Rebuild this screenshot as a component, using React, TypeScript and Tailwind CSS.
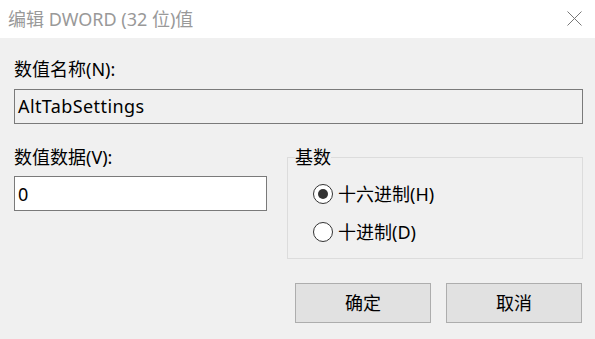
import React, { useState } from 'react';

const font = { fontFamily: '"Segoe UI", "Noto Sans", "Noto Sans CJK SC", sans-serif' };

function Radio({ checked, label, onClick }: { checked: boolean; label: string; onClick: () => void }) {
  return (
    <button type="button" onClick={onClick} className="flex items-center h-[24px] text-[18px] leading-[24px] text-black">
      <span className="w-[20px] h-[20px] rounded-full border-[1.5px] border-[#333] bg-white flex items-center justify-center">
        {checked && <span className="w-[10px] h-[10px] rounded-full bg-[#333]" />}
      </span>
      <span className="ml-[5px]">{label}</span>
    </button>
  );
}

export default function App() {
  const [hex, setHex] = useState(true);
  const [value, setValue] = useState('0');

  return (
    <div className="w-[595px] h-[339px] bg-[#f0f0f0] overflow-hidden" style={font}>
      {/* title bar */}
      <div className="h-[38px] bg-white flex items-center justify-between pl-[8px] pr-[13px]">
        <span className="text-[18px] leading-[24px] text-[#999]">编辑 DWORD (32 位)值</span>
        <svg width="15" height="15" viewBox="0 0 15 15" className="mb-[1px]">
          <path d="M0.5 0.5 L14.5 14.5 M14.5 0.5 L0.5 14.5" stroke="#777" strokeWidth="1" fill="none" />
        </svg>
      </div>

      <div className="pl-[14px] pr-[12px] pt-[19px]">
        <div className="text-[18px] leading-[24px] text-black">数值名称(N):</div>
        <div className="mt-[8px] h-[35px] border border-[#7a7a7a] bg-[#f0f0f0] flex items-center pl-[3px] text-[18px] tracking-[0.4px] text-black">
          AltTabSettings
        </div>

        <div className="flex items-start mt-[21px]">
          <div className="w-[253px]">
            <div className="text-[18px] leading-[24px] text-black">数值数据(V):</div>
            <input
              value={value}
              onChange={(e) => setValue(e.target.value)}
              className="mt-[7px] w-full h-[35px] border border-[#7a7a7a] bg-white pl-[3px] text-[18px] text-black outline-none"
            />
          </div>
          <fieldset className="ml-[20px] w-[296px] h-[114px] border border-[#dcdcdc]">
            <legend className="ml-[7px] text-[18px] leading-[24px] text-black">基数</legend>
            <div className="flex flex-col gap-[14px] pl-[25px] pt-[13px]">
              <Radio checked={hex} label="十六进制(H)" onClick={() => setHex(true)} />
              <Radio checked={!hex} label="十进制(D)" onClick={() => setHex(false)} />
            </div>
          </fieldset>
        </div>

        <div className="flex justify-end gap-[15px] mt-[24px] pr-[1px]">
          <button type="button" className="w-[136px] h-[40px] border border-[#adadad] bg-[#e1e1e1] text-[18px] text-black">
            确定
          </button>
          <button type="button" className="w-[136px] h-[40px] border border-[#adadad] bg-[#e1e1e1] text-[18px] text-black">
            取消
          </button>
        </div>
      </div>
    </div>
  );
}
